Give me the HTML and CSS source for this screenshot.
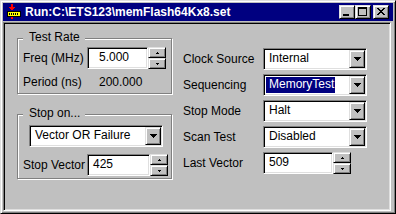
FILE: index.html
```html
<!DOCTYPE html>
<html>
<head>
<meta charset="utf-8">
<link rel="stylesheet" href="styles.css">
</head>
<body>
<div class="window">
  <div class="titlebar">
    <svg class="app-icon" width="16" height="16" viewBox="0 0 16 16" shape-rendering="crispEdges">
      <rect x="5" y="0" width="2" height="3" fill="#ff0000"/>
      <path d="M3 3h6v1h-1v1h-1v1h-2v-1h-1v-1h-1z" fill="#ff0000"/>
      <rect x="1" y="7" width="14" height="6" fill="#000000"/>
      <rect x="2" y="8" width="12" height="4" fill="#ffff00"/>
      <rect x="3" y="9" width="1" height="2" fill="#000"/>
      <rect x="5" y="9" width="1" height="2" fill="#000"/>
      <rect x="7" y="9" width="1" height="2" fill="#000"/>
      <rect x="9" y="9" width="1" height="2" fill="#000"/>
      <rect x="11" y="9" width="1" height="2" fill="#000"/>
      <rect x="5" y="13" width="2" height="2" fill="#ff0000"/>
    </svg>
    <span class="title">Run:C:\ETS123\memFlash64Kx8.set</span>
    <div class="caption-btns">
      <span class="cbtn">
        <svg width="14" height="12" viewBox="0 0 14 12" shape-rendering="crispEdges"><rect x="3" y="8" width="6" height="2" fill="#000"/></svg>
      </span>
      <span class="cbtn">
        <svg width="14" height="12" viewBox="0 0 14 12" shape-rendering="crispEdges"><path d="M2 1h9v9h-9z M3 3v6h7v-6z" fill="#000" fill-rule="evenodd"/></svg>
      </span>
      <span class="cbtn close">
        <svg width="14" height="12" viewBox="0 0 14 12" shape-rendering="crispEdges"><path d="M3 2h2v1h1v1h2v-1h1v-1h2v1h-1v1h-1v1h-1v1h1v1h1v1h1v1h-2v-1h-1v-1h-2v1h-1v1h-2v-1h1v-1h1v-1h1v-1h-1v-1h-1v-1h-1z" fill="#000"/></svg>
      </span>
    </div>
  </div>
  <div class="client">
    <div class="left">
      <div class="group g1">
        <span class="legend">Test Rate</span>
        <div class="row">
          <span class="lbl">Freq (MHz)</span>
          <div class="edit freq">5.000</div>
          <div class="spin">
            <span class="sbtn"><svg width="3" height="2" viewBox="0 0 3 2" shape-rendering="crispEdges"><path d="M1 0h1v1h1v1h-3v-1h1z" fill="#000"/></svg></span>
            <span class="sbtn"><svg width="3" height="2" viewBox="0 0 3 2" shape-rendering="crispEdges"><path d="M0 0h3v1h-1v1h-1v-1h-1z" fill="#000"/></svg></span>
          </div>
        </div>
        <div class="row period">
          <span class="lbl">Period (ns)</span>
          <span class="val">200.000</span>
        </div>
      </div>
      <div class="group g2">
        <span class="legend">Stop on...</span>
        <div class="combo stopon">
          <span class="ctext">Vector OR Failure</span>
          <span class="abtn"><svg width="7" height="4" viewBox="0 0 7 4" shape-rendering="crispEdges"><path d="M0 0h7v1h-1v1h-1v1h-1v1h-1v-1h-1v-1h-1v-1h-1z" fill="#000"/></svg></span>
        </div>
        <div class="row sv">
          <span class="lbl">Stop Vector</span>
          <div class="edit stopvec">425</div>
          <div class="spin">
            <span class="sbtn"><svg width="3" height="2" viewBox="0 0 3 2" shape-rendering="crispEdges"><path d="M1 0h1v1h1v1h-3v-1h1z" fill="#000"/></svg></span>
            <span class="sbtn"><svg width="3" height="2" viewBox="0 0 3 2" shape-rendering="crispEdges"><path d="M0 0h3v1h-1v1h-1v-1h-1z" fill="#000"/></svg></span>
          </div>
        </div>
      </div>
    </div>
    <div class="right">
      <div class="rrow">
        <span class="rlbl">Clock Source</span>
        <div class="combo rc">
          <span class="ctext">Internal</span>
          <span class="abtn"><svg width="7" height="4" viewBox="0 0 7 4" shape-rendering="crispEdges"><path d="M0 0h7v1h-1v1h-1v1h-1v1h-1v-1h-1v-1h-1v-1h-1z" fill="#000"/></svg></span>
        </div>
      </div>
      <div class="rrow">
        <span class="rlbl">Sequencing</span>
        <div class="combo rc">
          <span class="ctext sel"><span class="hl">MemoryTest</span></span>
          <span class="abtn"><svg width="7" height="4" viewBox="0 0 7 4" shape-rendering="crispEdges"><path d="M0 0h7v1h-1v1h-1v1h-1v1h-1v-1h-1v-1h-1v-1h-1z" fill="#000"/></svg></span>
        </div>
      </div>
      <div class="rrow">
        <span class="rlbl">Stop Mode</span>
        <div class="combo rc">
          <span class="ctext">Halt</span>
          <span class="abtn"><svg width="7" height="4" viewBox="0 0 7 4" shape-rendering="crispEdges"><path d="M0 0h7v1h-1v1h-1v1h-1v1h-1v-1h-1v-1h-1v-1h-1z" fill="#000"/></svg></span>
        </div>
      </div>
      <div class="rrow">
        <span class="rlbl">Scan Test</span>
        <div class="combo rc">
          <span class="ctext">Disabled</span>
          <span class="abtn"><svg width="7" height="4" viewBox="0 0 7 4" shape-rendering="crispEdges"><path d="M0 0h7v1h-1v1h-1v1h-1v1h-1v-1h-1v-1h-1v-1h-1z" fill="#000"/></svg></span>
        </div>
      </div>
      <div class="rrow last">
        <span class="rlbl">Last Vector</span>
        <div class="edit lastvec">509</div>
        <div class="spin">
          <span class="sbtn"><svg width="3" height="2" viewBox="0 0 3 2" shape-rendering="crispEdges"><path d="M1 0h1v1h1v1h-3v-1h1z" fill="#000"/></svg></span>
          <span class="sbtn"><svg width="3" height="2" viewBox="0 0 3 2" shape-rendering="crispEdges"><path d="M0 0h3v1h-1v1h-1v-1h-1z" fill="#000"/></svg></span>
        </div>
      </div>
    </div>
  </div>
</div>
</body>
</html>
```
FILE: styles.css
```css
html, body {
  margin: 0;
  padding: 0;
}
body {
  width: 396px;
  height: 214px;
  overflow: hidden;
  background: #c0c0c0;
  font-family: "Liberation Sans", Arial, sans-serif;
  font-size: 12px;
  line-height: 14px;
  color: #000;
}
.window {
  box-sizing: border-box;
  width: 396px;
  height: 214px;
  background: #c0c0c0;
  border: 1px solid;
  border-color: #dfdfdf #000 #000 #dfdfdf;
  box-shadow: inset 1px 1px 0 #fff, inset -1px -1px 0 #808080;
  padding: 2px;
  display: flex;
  flex-direction: column;
}
.titlebar {
  height: 18px;
  flex: none;
  background: #000080;
  display: flex;
  align-items: center;
  padding-left: 3px;
}
.app-icon {
  display: block;
  flex: none;
}
.title {
  margin-left: 3px;
  color: #fff;
  font-weight: bold;
  font-size: 12px;
  line-height: 14px;
  white-space: nowrap;
}
.caption-btns {
  margin-left: auto;
  margin-right: 4px;
  display: flex;
}
.cbtn, .sbtn, .abtn {
  box-sizing: border-box;
  background: #c0c0c0;
  border: 1px solid;
  border-color: #dfdfdf #000 #000 #dfdfdf;
  box-shadow: inset 1px 1px 0 #fff, inset -1px -1px 0 #808080;
  display: flex;
  align-items: center;
  justify-content: center;
}
.cbtn {
  width: 16px;
  height: 14px;
}
.cbtn svg {
  display: block;
}
.cbtn.close {
  margin-left: 2px;
}
.client {
  flex: 1;
  margin-top: 1px;
  margin-right: 2px;
  border: 1px solid;
  border-color: #808080 #fff #fff #808080;
  box-shadow: inset 1px 1px 0 #000, inset -1px -1px 0 #dfdfdf;
  display: flex;
  align-items: flex-start;
}
.left {
  padding-left: 13px;
  padding-top: 15px;
  width: 155px;
  flex: none;
}
.group {
  box-sizing: border-box;
  position: relative;
  width: 155px;
  border: 1px solid #808080;
  box-shadow: 1px 1px 0 #fff, inset 1px 1px 0 #fff;
  padding-left: 5px;
}
.legend {
  position: absolute;
  left: 5px;
  top: -9px;
  padding: 0 5px 0 6px;
  background: #c0c0c0;
  white-space: nowrap;
}
.g1 {
  height: 56px;
  padding-top: 8px;
}
.g2 {
  height: 65px;
  margin-top: 20px;
  padding-top: 10px;
}
.row {
  display: flex;
  align-items: center;
  height: 22px;
}
.lbl {
  width: 64px;
  flex: none;
  white-space: nowrap;
}
.period {
  height: 14px;
  margin-top: 6px;
}
.val {
  padding-left: 12px;
}
.edit, .combo {
  box-sizing: border-box;
  height: 22px;
  border: 1px solid;
  border-color: #808080 #fff #fff #808080;
  box-shadow: inset 1px 1px 0 #000, inset -1px -1px 0 #dfdfdf;
  padding: 1px;
  background: #fff;
  line-height: 16px;
  white-space: nowrap;
  flex: none;
}
.edit {
  padding-left: 5px;
}
.edit.freq {
  width: 61px;
  padding-left: 11px;
}
.edit.stopvec {
  width: 63px;
}
.edit.lastvec {
  width: 70px;
}
.spin {
  width: 18px;
  height: 22px;
  display: flex;
  flex-direction: column;
  flex: none;
}
.sbtn {
  height: 11px;
}
.sbtn svg, .abtn svg {
  display: block;
}
.combo {
  display: flex;
}
.ctext {
  flex: 1;
  padding-left: 4px;
}
.ctext.sel {
  padding-left: 1px;
}
.hl {
  background: #000080;
  color: #fff;
  padding: 0 1px 2px 3px;
}
.abtn {
  width: 16px;
  height: 18px;
  flex: none;
}
.combo.stopon {
  width: 134px;
  margin-left: 6px;
}
.sv {
  margin-top: 7px;
}
.right {
  margin-left: 11px;
  padding-top: 25px;
}
.rrow {
  display: flex;
  align-items: center;
  height: 22px;
  margin-bottom: 4px;
}
.rrow.last {
  margin-top: 2px;
}
.rlbl {
  width: 80px;
  flex: none;
  white-space: nowrap;
}
.combo.rc {
  width: 104px;
}
```
